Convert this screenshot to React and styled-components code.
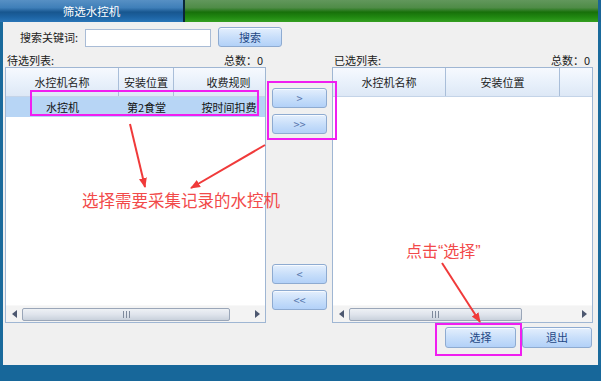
import styled, { createGlobalStyle } from "styled-components";

const GlobalStyle = createGlobalStyle`
  html, body {
    margin: 0;
    padding: 0;
    background: #f0f0f0;
  }
  body {
    font-family: "Noto Sans CJK SC", "Noto Sans", sans-serif;
    font-size: 11px;
    color: #1a1a1a;
  }
`;

const leftCols = [
  { title: "水控机名称", width: 113 },
  { title: "安装位置", width: 55 },
  { title: "收费规则", width: 110 }
];

const rightCols = [
  { title: "水控机名称", width: 113 },
  { title: "安装位置", width: 114 },
  { title: "", width: 60 }
];

const rows = [["水控机", "第2食堂", "按时间扣费"]];

const App = () => {
  return (
    <>
      <GlobalStyle />
      <Window>
        <TitleBar>
          <Tab>筛选水控机</Tab>
          <TitleFill />
        </TitleBar>
        <Body>
          <SearchRow>
            <Label>搜索关键词:</Label>
            <SearchInput />
            <Button $w={64} $h={20}>搜索</Button>
          </SearchRow>
          <ListsRow>
            <ListPane title="待选列表:" cols={leftCols} rows={rows} thumb={[16, 224]} />
            <MoveColumn>
              <MoveGroup>
                <Button $w={55} $h={20} $arrow>&gt;</Button>
                <Button $w={55} $h={20} $arrow>&gt;&gt;</Button>
              </MoveGroup>
              <MoveGroup>
                <Button $w={55} $h={20} $arrow>&lt;</Button>
                <Button $w={55} $h={20} $arrow>&lt;&lt;</Button>
              </MoveGroup>
            </MoveColumn>
            <ListPane title="已选列表:" cols={rightCols} rows={[]} thumb={[16, 189]} />
          </ListsRow>
          <Footer>
            <Button $w={71} $h={21}>选择</Button>
            <Button $w={70} $h={21}>退出</Button>
          </Footer>
        </Body>
        <StatusBar />

        <Overlay>
          <svg width="601" height="381" viewBox="0 0 601 381">
            <defs>
              <marker id="head" viewBox="0 0 10 10" refX="9" refY="5" markerWidth="5" markerHeight="5" orient="auto">
                <path d="M0 1 L10 5 L0 9 Z" fill="#f03a3a" />
              </marker>
            </defs>
            <line x1="130" y1="124" x2="145" y2="187" stroke="#f03a3a" strokeWidth="2" markerEnd="url(#head)" />
            <line x1="265" y1="145" x2="191" y2="188" stroke="#f03a3a" strokeWidth="2" markerEnd="url(#head)" />
            <line x1="442" y1="263" x2="480" y2="322" stroke="#f03a3a" strokeWidth="2" markerEnd="url(#head)" />
          </svg>
          <Mark $x={30} $y={90} $w={229} $h={26} />
          <Mark $x={267} $y={81} $w={70} $h={59} />
          <Mark $x={435} $y={323} $w={87} $h={33} />
          <Note $x={82} $y={191} $size={16.5}>选择需要采集记录的水控机</Note>
          <Note $x={406} $y={242} $size={16}>点击“选择”</Note>
        </Overlay>
      </Window>
    </>
  );
};

export default App;

const ListPane = ({ title, cols, rows, thumb }) => (
  <Pane>
    <PaneHead>
      <span>{title}</span>
      <span>总数：0</span>
    </PaneHead>
    <Table>
      <Viewport>
        <HeaderRow>
          {cols.map((c, i) => (
            <HeadCell key={i} $w={c.width}>{c.title}</HeadCell>
          ))}
        </HeaderRow>
        {rows.map((r, ri) => (
          <DataRow key={ri} $selected>
            {r.map((v, ci) => (
              <Cell key={ci} $w={cols[ci].width}>{v}</Cell>
            ))}
          </DataRow>
        ))}
      </Viewport>
      <ScrollBar>
        <Arrow $dir="left" />
        <Track>
          <Thumb style={{ marginLeft: thumb[0], width: thumb[1] - thumb[0] }}>
            <Grip />
          </Thumb>
        </Track>
        <Arrow $dir="right" />
      </ScrollBar>
    </Table>
  </Pane>
);

const Window = styled.div`
  position: relative;
  width: 601px;
  height: 381px;
  display: flex;
  flex-direction: column;
  overflow: hidden;
  background: #f0f0f0;
`;

const TitleBar = styled.div`
  height: 22px;
  display: flex;
  flex-shrink: 0;
  background: #1a6496;
  padding-right: 3px;
`;

const Tab = styled.div`
  width: 183px;
  border-right: 2px solid #0b2638;
  display: flex;
  align-items: center;
  justify-content: center;
  color: #ffffff;
  font-size: 11.5px;
  background: linear-gradient(
    to bottom,
    #5790c4 0%,
    #3f7fb9 35%,
    #17568f 55%,
    #1e65a5 80%,
    #2a76b8 100%
  );
`;

const TitleFill = styled.div`
  flex: 1;
  background: linear-gradient(
    to bottom,
    #62975c 0%,
    #4f8c47 35%,
    #17700a 55%,
    #228a12 80%,
    #35a022 100%
  );
`;

const Body = styled.div`
  flex: 1;
  display: flex;
  flex-direction: column;
  border-left: 3px solid #1a6a9c;
  border-right: 3px solid #1a6a9c;
  background: #f0f0f0;
`;

const SearchRow = styled.div`
  display: flex;
  align-items: center;
  height: 20px;
  margin-top: 5px;
  padding-left: 17px;
`;

const Label = styled.span`
  margin-right: 7px;
  color: #222;
`;

const SearchInput = styled.input`
  box-sizing: border-box;
  width: 126px;
  height: 18px;
  margin: 1px 7px 0 0;
  border: 1px solid #a9bcd6;
  background: #fff;
  outline: none;
`;

const Button = styled.button`
  box-sizing: border-box;
  width: ${(p) => p.$w}px;
  height: ${(p) => p.$h}px;
  padding: 0;
  border: 1px solid #8eabd1;
  border-radius: 3px;
  background: linear-gradient(to bottom, #e4effd 0%, #c9dffa 50%, #b2d1f8 100%);
  color: ${(p) => (p.$arrow ? "#5876ad" : "#1f4886")};
  font-family: "Noto Sans CJK SC", sans-serif;
  font-size: 11px;
  line-height: 1;
  box-shadow: inset 0 1px 0 rgba(255, 255, 255, 0.7);
`;

const ListsRow = styled.div`
  display: flex;
  margin-top: 6px;
  padding-left: 2px;
`;

const Pane = styled.div`
  width: 261px;
  display: flex;
  flex-direction: column;
`;

const PaneHead = styled.div`
  height: 14px;
  display: flex;
  justify-content: space-between;
  align-items: center;
  padding: 0 3px 0 2px;
  color: #1a1a1a;
`;

const Table = styled.div`
  box-sizing: border-box;
  height: 256px;
  border: 1px solid #9fb6d3;
  background: #fff;
  display: flex;
  flex-direction: column;
  overflow: hidden;
`;

const Viewport = styled.div`
  flex: 1;
  overflow: hidden;
`;

const HeaderRow = styled.div`
  display: flex;
  height: 28px;
  width: max-content;
  border-bottom: 1px solid #c4d4e8;
  background: linear-gradient(to bottom, #f6f9fe 0%, #e9f1fb 50%, #dde8f6 100%);
`;

const HeadCell = styled.div`
  box-sizing: border-box;
  width: ${(p) => p.$w}px;
  flex-shrink: 0;
  border-right: 1px solid #a9bed9;
  display: flex;
  align-items: center;
  justify-content: center;
  color: #1a1a1a;
  white-space: nowrap;
`;

const DataRow = styled.div`
  display: flex;
  height: 20px;
  min-width: 100%;
  width: max-content;
  background: ${(p) => (p.$selected ? "#b7d5f5" : "#fff")};
`;

const Cell = styled.div`
  box-sizing: border-box;
  width: ${(p) => p.$w}px;
  flex-shrink: 0;
  display: flex;
  align-items: center;
  justify-content: center;
  white-space: nowrap;
  color: #111;
`;

const ScrollBar = styled.div`
  height: 16px;
  display: flex;
  align-items: center;
  background: #f3f3f3;
  border-top: 1px solid #f8f8f8;
`;

const Arrow = styled.span`
  width: 16px;
  height: 16px;
  display: flex;
  align-items: center;
  justify-content: center;
  &::before {
    content: "";
    border-top: 4px solid transparent;
    border-bottom: 4px solid transparent;
    ${(p) =>
      p.$dir === "left"
        ? "border-right: 5px solid #4d5870;"
        : "border-left: 5px solid #4d5870;"}
  }
`;

const Track = styled.div`
  flex: 1;
  height: 14px;
  display: flex;
  align-items: center;
  margin-left: -16px;
`;

const Thumb = styled.div`
  box-sizing: border-box;
  height: 13px;
  border: 1px solid #9aa6b8;
  border-radius: 2px;
  background: linear-gradient(to bottom, #eef1f5 0%, #dfe4ec 50%, #c9d1dc 100%);
  display: flex;
  align-items: center;
  justify-content: center;
`;

const Grip = styled.span`
  width: 7px;
  height: 7px;
  background: repeating-linear-gradient(
    to right,
    #7f8a9c 0,
    #7f8a9c 1px,
    transparent 1px,
    transparent 3px
  );
`;

const MoveColumn = styled.div`
  width: 66px;
  box-sizing: border-box;
  padding: 35px 0 13px 6px;
  display: flex;
  flex-direction: column;
  justify-content: space-between;
`;

const MoveGroup = styled.div`
  display: flex;
  flex-direction: column;
  gap: 6px;
`;

const Footer = styled.div`
  display: flex;
  justify-content: flex-end;
  gap: 6px;
  margin-top: 4px;
  padding-right: 6px;
`;

const StatusBar = styled.div`
  height: 16px;
  flex-shrink: 0;
  background: #17679a;
`;

const Overlay = styled.div`
  position: absolute;
  inset: 0;
  pointer-events: none;
  svg {
    position: absolute;
    left: 0;
    top: 0;
  }
`;

const Mark = styled.div`
  position: absolute;
  left: ${(p) => p.$x}px;
  top: ${(p) => p.$y}px;
  width: ${(p) => p.$w}px;
  height: ${(p) => p.$h}px;
  box-sizing: border-box;
  border: 2px solid #f01ef0;
`;

const Note = styled.div`
  position: absolute;
  left: ${(p) => p.$x}px;
  top: ${(p) => p.$y}px;
  color: #f24a4a;
  font-family: "Liberation Sans", "Noto Sans CJK SC", sans-serif;
  font-size: ${(p) => p.$size}px;
  white-space: nowrap;
  line-height: 1.3;
`;
